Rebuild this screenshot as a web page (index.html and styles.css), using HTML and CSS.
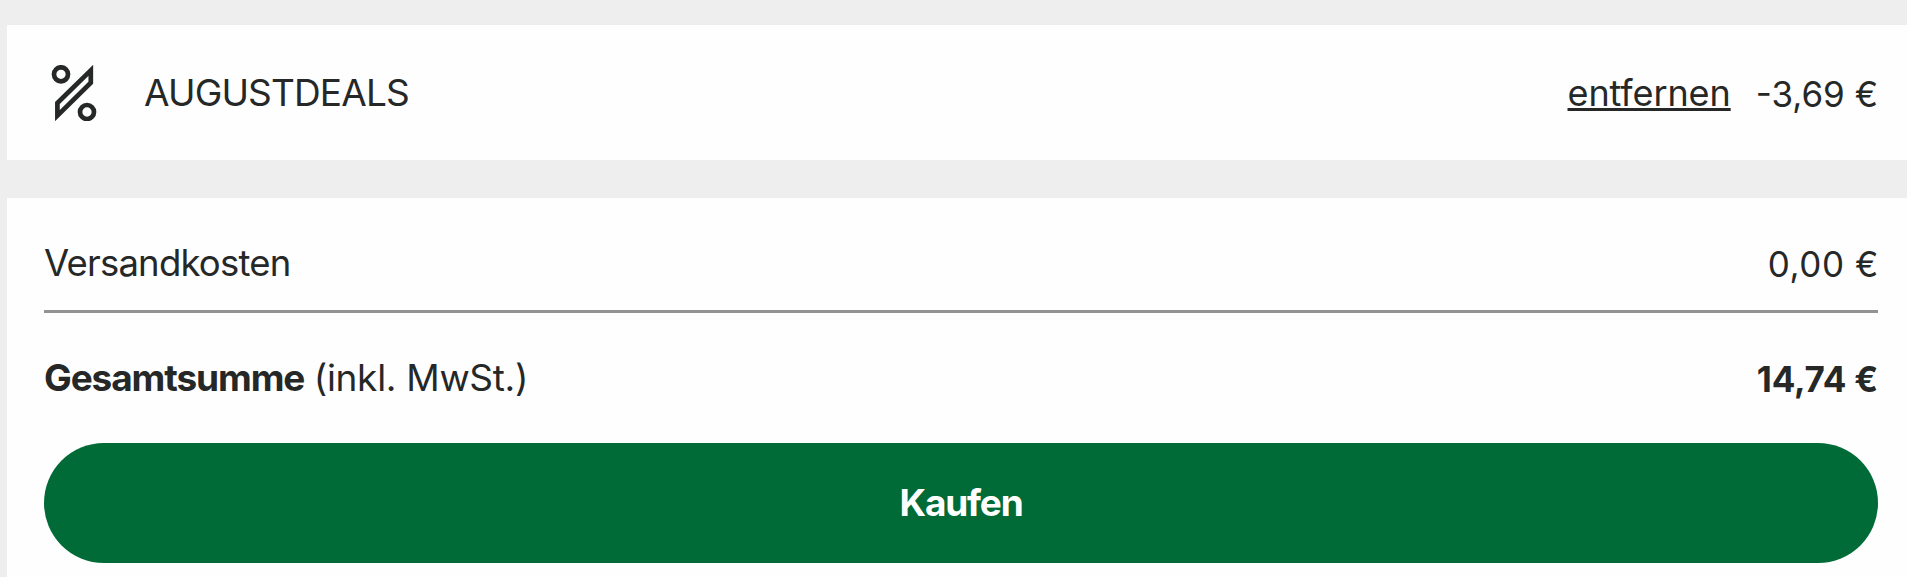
FILE: index.html
```html
<!DOCTYPE html>
<html lang="de">

<head>
  <meta charset="utf-8" />
  <title>Warenkorb</title>
  <link rel="stylesheet" href="styles.css">
</head>

<body>
  <main class="summary">
    <section class="card coupon">
      <svg class="coupon-icon" viewBox="0 0 50 56" width="50" height="56" fill="none" stroke="currentColor" stroke-width="4.7">
        <circle cx="12" cy="9.3" r="7" />
        <circle cx="38" cy="47" r="7" />
        <path d="M8.4 38 41.8 5.4V17.8L8.4 50.6Z" />
      </svg>
      <span class="coupon-code">AUGUSTDEALS</span>
      <a class="coupon-remove" href="#">entfernen</a>
      <span class="coupon-price">-3,69 €</span>
    </section>

    <section class="card totals">
      <div class="row shipping">
        <span class="shipping-label">Versandkosten</span>
        <span class="shipping-price">0,00 €</span>
      </div>
      <div class="row total">
        <span class="total-label"><strong>Gesamtsumme</strong> <span class="vat">(inkl. MwSt.)</span></span>
        <strong class="total-price">14,74 €</strong>
      </div>
      <button class="buy" type="button">Kaufen</button>
    </section>
  </main>
</body>

</html>
```

FILE: styles.css
```css
* {
  box-sizing: border-box;
  margin: 0;
  padding: 0;
}

body {
  height: 100vh;
  overflow: hidden;
  background-color: #eee;
  color: #262828;
  font-family: "Inter", "Liberation Sans", sans-serif;
  font-size: 37px;
  font-weight: 430;
  line-height: 48px;
}

.summary {
  display: flex;
  flex-direction: column;
  gap: 38px;
  height: 100%;
  padding: 25px 0 0 7px;
}

.card {
  background-color: #fefefe;
  padding: 0 29px 0 37px;
}

.coupon {
  display: flex;
  flex: none;
  align-items: center;
  height: 135px;
}

.coupon-icon {
  margin-left: 5px;
  margin-right: 45px;
}

.coupon-code {
  letter-spacing: -0.85px;
}

.coupon-remove {
  margin-left: auto;
  margin-right: 25px;
  padding-top: 1px;
  color: inherit;
  font-size: 36px;
  letter-spacing: -0.1px;
  text-decoration-thickness: 3px;
  text-underline-offset: 2px;
}

.coupon-price {
  padding-top: 2px;
  font-size: 35px;
}

.totals {
  flex: 1;
}

.row {
  display: flex;
  justify-content: space-between;
  align-items: center;
}

.shipping {
  height: 115px;
  padding-top: 18px;
  border-bottom: 3px solid #929494;
}

.shipping-label {
  font-size: 36.5px;
  letter-spacing: -0.8px;
}

.shipping-price {
  padding-top: 1px;
  font-size: 35px;
  letter-spacing: 0.6px;
  margin-right: -1px;
}

.total {
  height: 130px;
}

.total-label strong {
  letter-spacing: -1.1px;
}

.vat {
  margin-left: -1px;
  letter-spacing: -0.3px;
}

.total-price {
  padding-top: 1px;
  font-size: 35px;
  letter-spacing: -0.2px;
}

.buy {
  display: block;
  width: 100%;
  height: 120px;
  border: 0;
  border-radius: 60px;
  background-color: #006b36;
  color: #fff;
  font: inherit;
  font-weight: 700;
  letter-spacing: -1.2px;
}
```
